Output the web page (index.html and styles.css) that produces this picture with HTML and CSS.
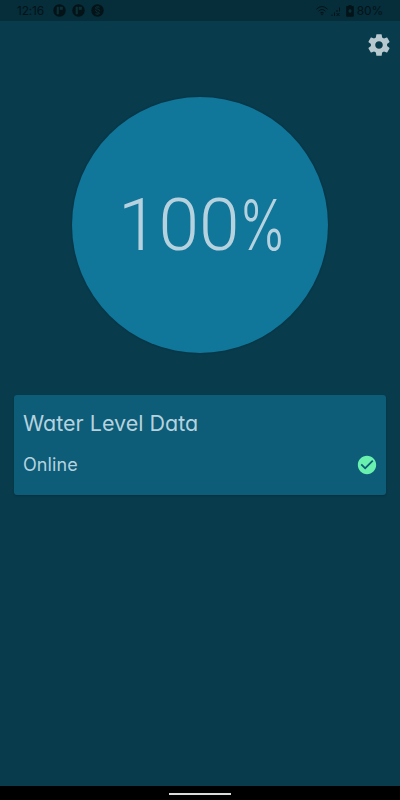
FILE: index.html
```
<!DOCTYPE html>
<html lang="en">
<head>
  <meta charset="UTF-8">
  <meta name="viewport" content="width=device-width, initial-scale=1.0">
  <title>Water Level</title>
  <link rel="stylesheet" href="styles.css">
</head>
<body>
  <header class="status-bar">
    <span class="clock">12:16</span>
    <div class="notifications">
      <svg width="13" height="13" viewBox="0 0 13 13"><circle cx="6.5" cy="6.5" r="6.2" fill="#031318"/><path d="M4 3h1.500v7H4zM7 3h2.500v2.500H7z" fill="#0b3038" stroke="#0b3038" stroke-width=".6"/></svg>
      <svg width="13" height="13" viewBox="0 0 13 13"><circle cx="6.5" cy="6.5" r="6.2" fill="#031318"/><path d="M4 3h1.500v7H4zM7 3h2.500v2.500H7z" fill="#0b3038" stroke="#0b3038" stroke-width=".6"/></svg>
      <svg width="13" height="13" viewBox="0 0 13 13"><circle cx="6.5" cy="6.5" r="6.2" fill="#031318"/><path d="M8.600 3.200Q6.500 1.800 4.600 3.200Q4 5 6.500 5.200T8.500 7.200M4.500 5.800Q4.500 7.800 6.500 8T8.500 9.600Q6.500 11.200 4.400 9.800M5.500 3.800h2M5.500 9.200h2" fill="none" stroke="#0b3038" stroke-width=".9"/></svg>
    </div>
    <div class="system">
      <svg width="14" height="11" viewBox="0 0 14 11" fill="none" stroke="#031318"><path d="M1.500 4.200Q7-1.200 12.500 4.200M3.500 6.200Q7 2.800 10.500 6.200M5.200 8Q7 6.500 8.800 8"/><circle cx="7" cy="9.200" r=".5"/></svg>
      <svg class="signal" width="10" height="11" viewBox="0 0 10 11" fill="none" stroke="#031318"><path d="M1 10V8.500M3.500 10V6.500M6 6V4M8.500 5.500V1.500M5.500 7l3 3M8.500 7l-3 3"/></svg>
      <svg width="8" height="12" viewBox="0 0 8 12"><path d="M2.500 0h3v1H7q.8 0 .8.8v9.200q0 .8-.8.8H1q-.8 0-.8-.8V1.800Q.2 1 1 1h1.500z" fill="#031318"/><path d="M4 4v4M2.300 6h3.400" fill="none" stroke="#0b3a46"/></svg>
      <span class="percent">80%</span>
    </div>
  </header>

  <main class="screen">
    <button class="settings" aria-label="Settings">
      <svg width="26" height="26" viewBox="0 0 24 24"><path fill="#b7c8ce" d="M19.430 12.980c.04-.32.07-.64.07-.98s-.03-.66-.07-.98l2.110-1.650c.19-.15.24-.42.12-.64l-2-3.460c-.12-.22-.39-.3-.61-.22l-2.490 1c-.52-.4-1.080-.73-1.690-.98l-.38-2.650C14.460 2.180 14.250 2 14 2h-4c-.25 0-.46.18-.49.42l-.38 2.650c-.61.25-1.170.59-1.690.98l-2.490-1c-.23-.09-.49 0-.61.22l-2 3.460c-.13.22-.07.49.12.64l2.110 1.650c-.04.32-.07.65-.07.98s.03.66.07.98l-2.110 1.650c-.19.15-.24.42-.12.64l2 3.460c.12.22.39.3.61.22l2.490-1c.52.4 1.080.73 1.690.98l.38 2.650c.03.24.24.42.49.42h4c.25 0 .46-.18.49-.42l.38-2.650c.61-.25 1.170-.59 1.690-.98l2.490 1c.23.09.49 0 .61-.22l2-3.460c.12-.22.07-.49-.12-.64zM12 15.500c-1.930 0-3.500-1.570-3.500-3.500s1.570-3.500 3.500-3.500 3.500 1.570 3.500 3.500-1.570 3.500-3.500 3.500z"/></svg>
    </button>

    <div class="level"><span class="level-value">100</span><span class="level-unit">%</span></div>

    <section class="card">
      <h1 class="card-title">Water Level Data</h1>
      <div class="card-row">
        <span class="state">Online</span>
        <svg width="22" height="22" viewBox="0 0 24 24"><path fill="#69f0ae" d="M12 2C6.480 2 2 6.480 2 12s4.480 10 10 10 10-4.480 10-10S17.520 2 12 2zm-2 15l-5-5 1.410-1.410L10 14.170l7.590-7.590L19 8z"/></svg>
      </div>
    </section>
  </main>

  <footer class="nav-bar"><div class="nav-handle"></div></footer>
</body>
</html>
```
FILE: styles.css
```
* {
  box-sizing: border-box;
}

body {
  margin: 0;
  height: 800px;
  display: flex;
  flex-direction: column;
  overflow: hidden;
  background: #083b4c;
  color: #b5d2de;
  font-family: Inter, sans-serif;
  font-feature-settings: "cv11";
}

svg {
  display: block;
}

.status-bar {
  height: 21px;
  flex: none;
  display: flex;
  align-items: center;
  padding: 0 17px;
  background: #062d3a;
  color: #031318;
  font-size: 12px;
  line-height: 22px;
}

.clock {
  width: 36px;
  letter-spacing: -0.2px;
}

.notifications {
  display: flex;
  gap: 6px;
}

.system {
  display: flex;
  align-items: center;
  margin-left: auto;
}

.signal {
  margin: 2px 5px 0 2px;
}

.percent {
  margin-left: 3px;
  letter-spacing: -0.2px;
}

.screen {
  flex: 1;
  display: flex;
  flex-direction: column;
}

.settings {
  align-self: flex-end;
  margin: 11px 8px 0 0;
  padding: 0;
  border: none;
  background: none;
}

.level {
  width: 256px;
  height: 256px;
  flex: none;
  align-self: center;
  display: flex;
  align-items: center;
  margin-top: 39px;
  padding-left: 46px;
  border-radius: 50%;
  background: #10769a;
  box-shadow: 0 0 2px rgba(0, 20, 30, 0.4);
  font-family: Roboto, sans-serif;
  font-size: 73px;
  font-weight: 300;
  line-height: 86px;
}

.level-unit {
  font-family: Inter, sans-serif;
  font-size: 70px;
  font-weight: 300;
  transform: scaleX(0.72);
  transform-origin: left;
}

.card {
  height: 100px;
  margin: 42px 14px 0;
  padding: 12px 8px 0 9px;
  border-radius: 3px;
  background: #0d5c78;
  box-shadow: 0 1px 2px rgba(0, 0, 0, 0.2);
}

.card-title {
  margin: 0;
  font-size: 21.5px;
  font-weight: 400;
  line-height: 32px;
}

.card-row {
  display: flex;
  align-items: center;
  justify-content: space-between;
  margin-top: 12px;
  font-size: 18px;
  letter-spacing: 0.1px;
  line-height: 27px;
}

.nav-bar {
  height: 14px;
  flex: none;
  display: flex;
  justify-content: center;
  padding-top: 7px;
  background: #000;
}

.nav-handle {
  width: 62px;
  height: 2px;
  background: #d9dcda;
}
```
